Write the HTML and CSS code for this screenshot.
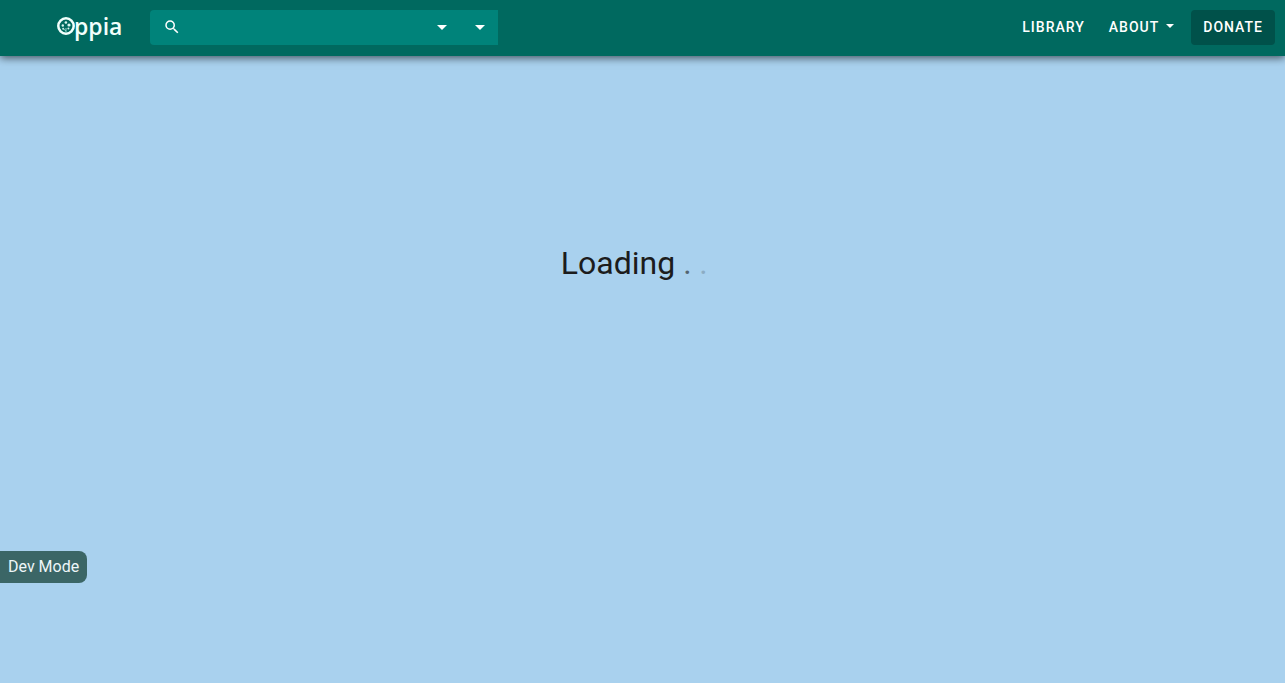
FILE: index.html
```html
<!DOCTYPE html>
<html lang="en">
<head>
<meta charset="utf-8">
<title>Oppia</title>
<link rel="stylesheet" href="styles.css">
</head>
<body>
<header class="navbar">
  <a class="logo" href="#" aria-label="Oppia">
    <svg class="logo-mark" viewBox="0 0 20 20" aria-hidden="true">
      <circle cx="10" cy="10" r="7.700" fill="none" stroke="#f2fffc" stroke-width="2.500"/>
      <g fill="#d8f5ef">
        <circle cx="6.800" cy="9.500" r="1.200"/>
        <circle cx="9.900" cy="6.500" r="1.300"/>
        <circle cx="13" cy="9" r="1.600"/>
        <circle cx="7.200" cy="12.800" r="1"/>
        <circle cx="12.400" cy="12.500" r="1"/>
      </g>
      <path d="M10 17v-5M10 15l-2.400-2" fill="none" stroke="#8fd3c8" stroke-width="1"/>
    </svg>
    <span class="logo-text">ppia</span>
  </a>
  <form class="search" role="search">
    <label class="search-icon" for="query" aria-label="Search">
      <svg viewBox="0 0 24 24" aria-hidden="true"><path fill="#fff" d="M15.500 14h-.79l-.28-.27A6.471 6.471 0 0 0 16 9.500 6.500 6.500 0 1 0 9.500 16c1.610 0 3.090-.59 4.230-1.570l.27.28v.79l5 4.990L20.490 19l-4.990-5zm-6 0C7.010 14 5 11.990 5 9.500S7.010 5 9.500 5 14 7.010 14 9.500 11.990 14 9.500 14z"/></svg>
    </label>
    <input class="search-input" id="query" type="text">
    <button class="search-filter" type="button" aria-label="Categories"><span class="caret"></span></button>
    <button class="search-filter" type="button" aria-label="Languages"><span class="caret"></span></button>
  </form>
  <nav class="links">
    <a class="link" href="#">LIBRARY</a>
    <a class="link" href="#">ABOUT <span class="caret caret-small"></span></a>
    <a class="link donate" href="#">DONATE</a>
  </nav>
</header>
<main class="loading">
  <p class="loading-text">Loading<span class="dot dot-first">.</span><span class="dot dot-second">.</span><span class="dot dot-third"></span></p>
</main>
<div class="dev-mode">Dev Mode</div>
</body>
</html>
```
FILE: styles.css
```css
* {
  box-sizing: border-box;
}

body {
  margin: 0;
  min-height: 100vh;
  background: #a9d1ee;
  font-family: Roboto, "Liberation Sans", sans-serif;
}

.navbar {
  display: flex;
  align-items: center;
  height: 56px;
  padding: 0 10px 0 56px;
  background: #00695f;
  box-shadow: 0 2px 8px rgba(0, 0, 0, 0.6);
}

.logo {
  display: flex;
  align-items: center;
  width: 94px;
  color: #f2fffc;
  text-decoration: none;
}

.logo-mark {
  width: 20px;
  height: 20px;
  margin-bottom: 5px;
}

.logo-text {
  font: 600 23px/32px "Open Sans", sans-serif;
  padding-bottom: 4px;
  margin-left: -2px;
}

.search {
  display: flex;
  width: 348px;
  height: 35px;
  margin-bottom: 1px;
  padding-left: 13px;
  background: #00837a;
  border-radius: 4px 0 0 4px;
}

.search-icon {
  display: flex;
  align-items: center;
  padding-bottom: 2px;
}

.search-icon svg {
  width: 18px;
  height: 18px;
}

.search-input {
  flex: 1;
  min-width: 0;
  border: 0;
  padding: 0 8px;
  background: transparent;
  color: #fff;
  font: inherit;
}

.search-filter {
  display: flex;
  align-items: center;
  justify-content: flex-end;
  width: 38px;
  padding: 0 13px 0 0;
  border: 0;
  background: transparent;
}

.caret {
  display: inline-block;
  border: 5px solid transparent;
  border-top-color: #fff;
  border-bottom: 0;
}

.caret-small {
  border-width: 4px;
  border-bottom: 0;
  margin-left: 7px;
  margin-bottom: 2px;
}

.links {
  display: flex;
  margin-left: auto;
  margin-bottom: 1px;
}

.link {
  display: flex;
  align-items: center;
  height: 35px;
  padding: 0 12px 1px;
  color: #fff;
  font-size: 14px;
  font-weight: 500;
  letter-spacing: 1px;
  text-decoration: none;
}

.donate {
  margin-left: 5px;
  background: #00514a;
  border-radius: 4px;
}

.loading {
  display: flex;
  justify-content: center;
  padding: 188px 1px 0 0;
}

.loading-text {
  display: flex;
  margin: 0;
  color: #1c1c1c;
  font-size: 32px;
  line-height: 38px;
}

.dot {
  width: 8px;
  margin-left: 8px;
}

.dot-first {
  opacity: 0.6;
}

.dot-second {
  opacity: 0.2;
}

.dev-mode {
  position: fixed;
  bottom: 100px;
  left: 0;
  padding: 0 8px;
  background: #3b6666;
  border-radius: 0 8px 8px 0;
  color: #eef6f8;
  font-size: 16px;
  line-height: 32px;
}
```
